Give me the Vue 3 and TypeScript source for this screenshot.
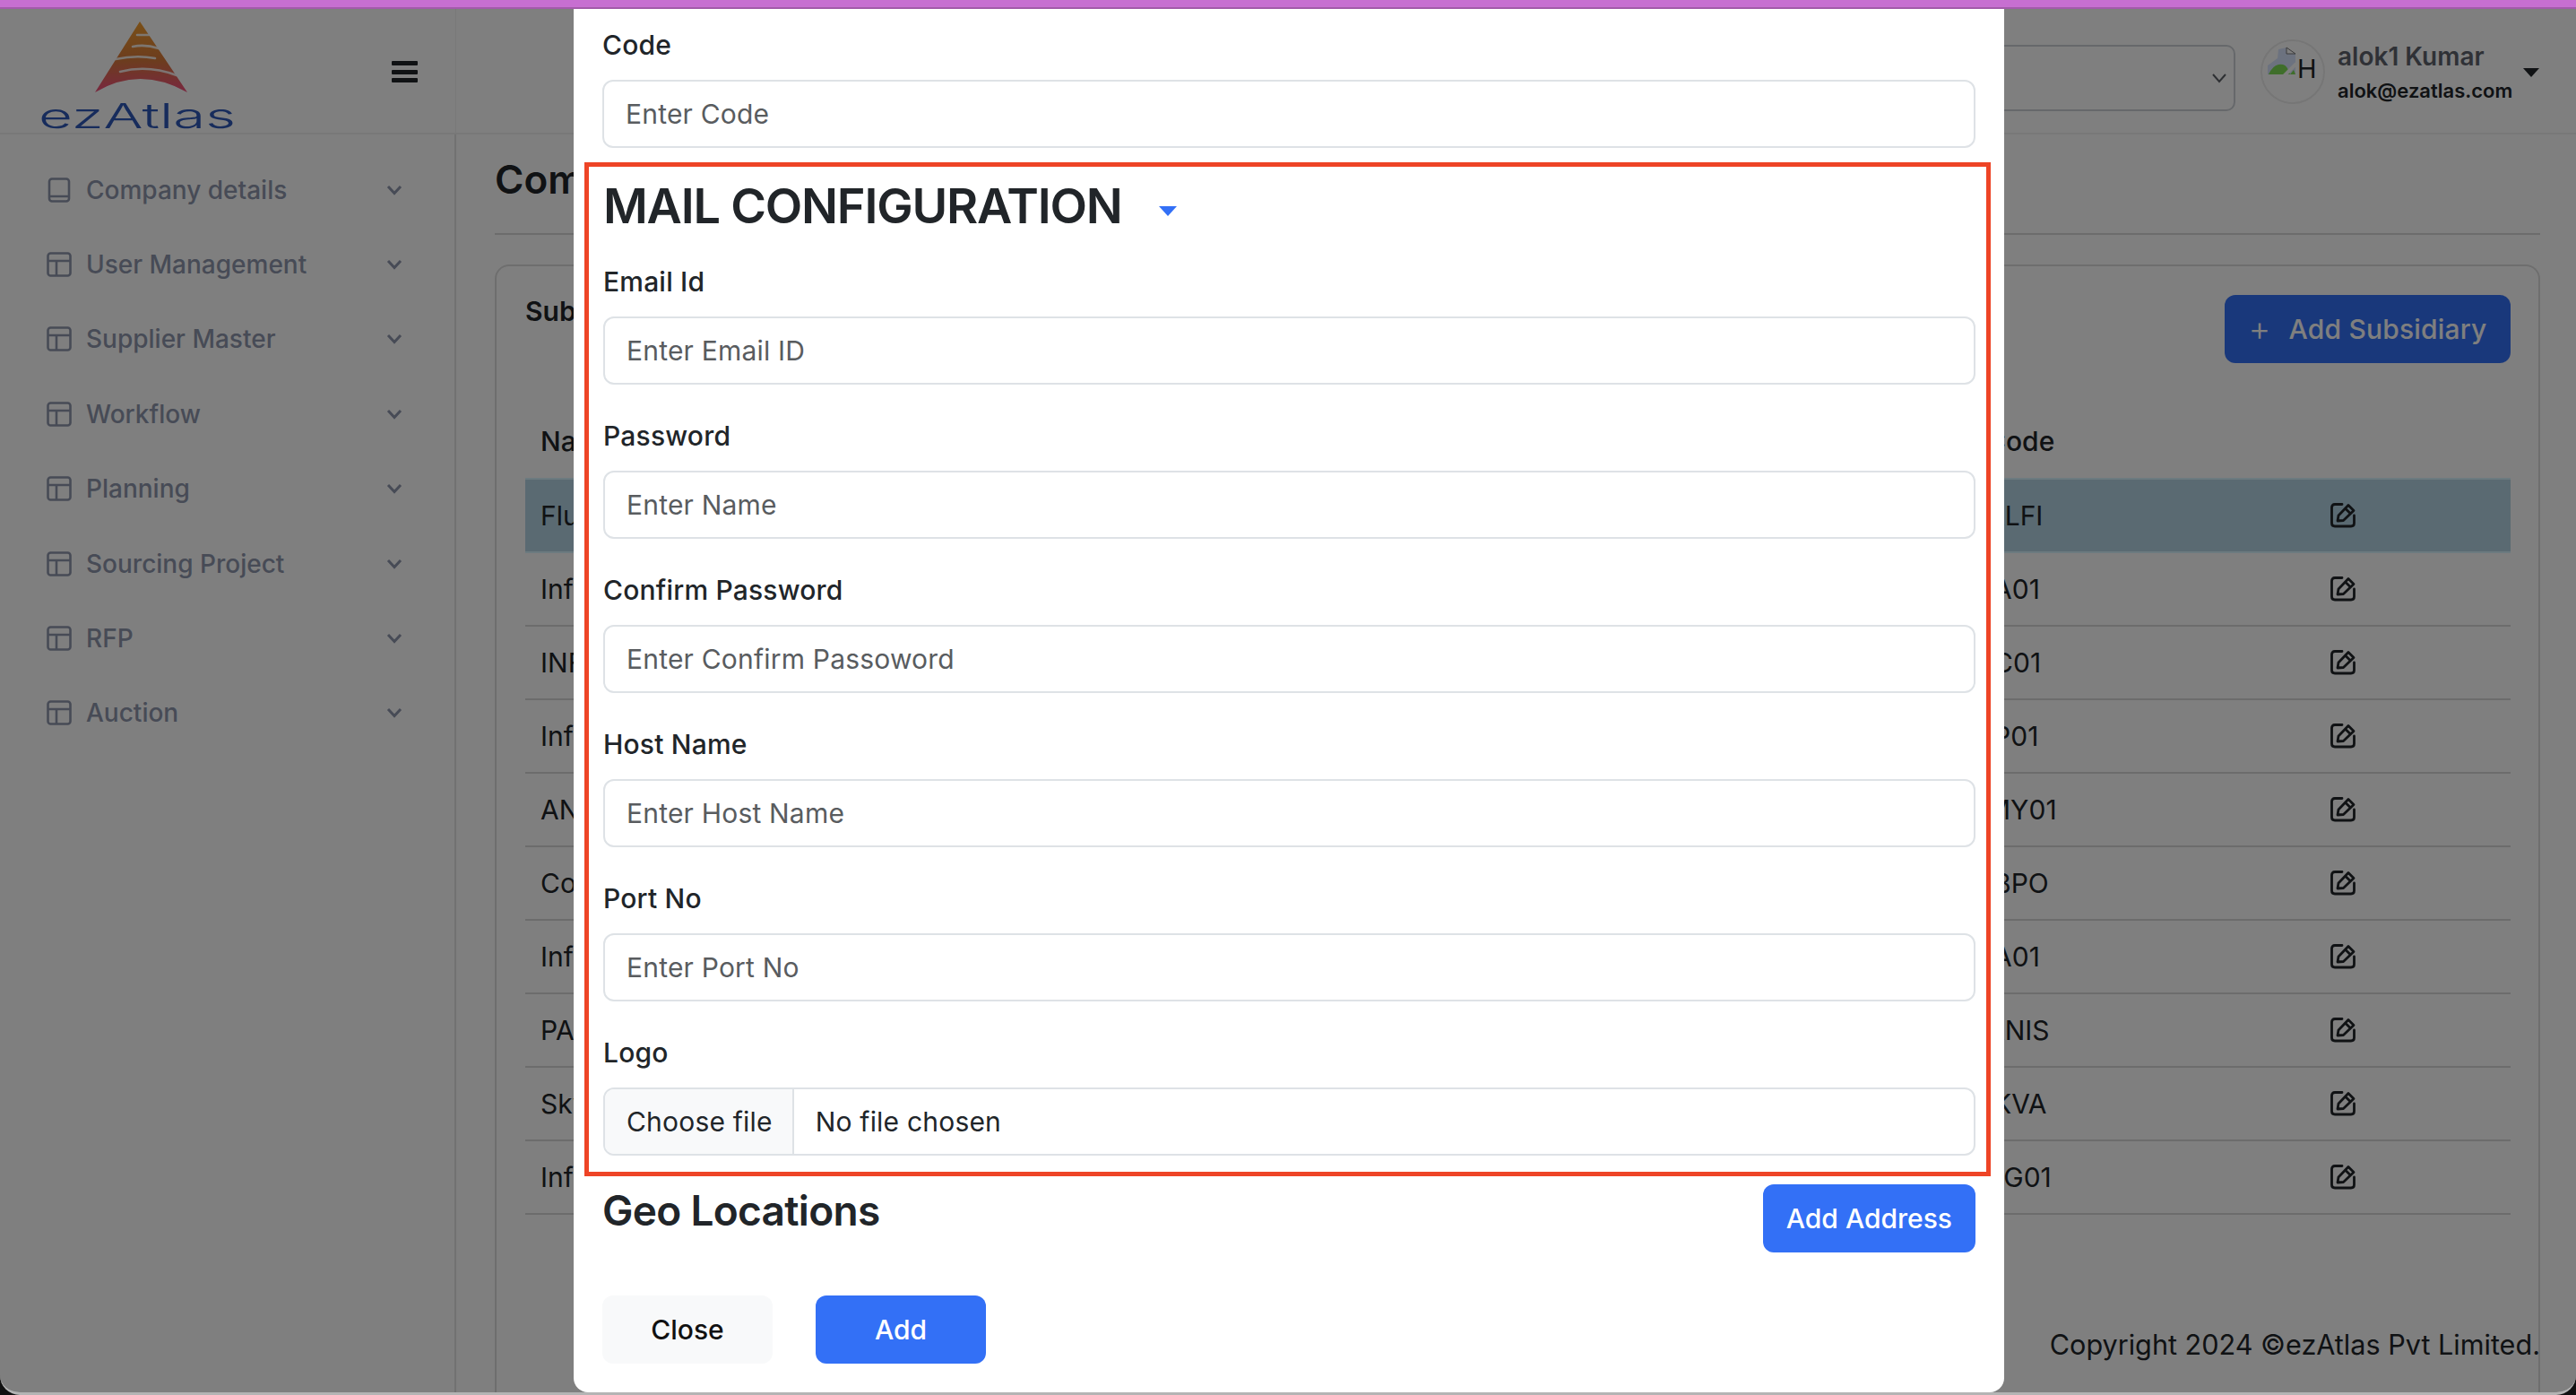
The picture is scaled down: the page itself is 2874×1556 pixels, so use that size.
<template>
  <div class="screen">
    <div class="top-stripe"></div>
    <div class="window">
      <header class="topbar">
        <div class="brand">
          <svg class="logo" viewBox="0 0 230 134" width="230" height="134">
            <defs>
              <linearGradient id="peak" x1="0" y1="0" x2="0" y2="1">
                <stop offset="0" stop-color="#f4a030" />
                <stop offset="0.55" stop-color="#d97a3c" />
                <stop offset="1" stop-color="#f24f80" />
              </linearGradient>
            </defs>
            <path d="M116 10 L169 89 Q116 59 66 89 Z" fill="url(#peak)" />
            <g fill="none" stroke="#fff" stroke-width="2.6" stroke-linecap="round" opacity="0.85">
              <path d="M94 66 Q125 58 157 70" />
              <path d="M89 52 Q112 47 133 51" />
              <path d="M108 38 Q122 35 137 40" />
              <path d="M113 25 H126" />
            </g>
            <text x="3" y="129" class="logo-text" textLength="220" lengthAdjust="spacingAndGlyphs">ezAtlas</text>
          </svg>
          <button class="burger" aria-label="Menu"><span></span><span></span><span></span></button>
        </div>
        <div class="topbar-right">
          <div class="org-select">
            <svg width="20" height="14" viewBox="0 0 20 14"><path d="M3 3 L10 11 L17 3" fill="none" stroke="#5d6166" stroke-width="2" /></svg>
          </div>
          <div class="avatar">
            <svg width="34" height="34" viewBox="0 0 34 34">
              <path d="M1 31 V21 L12 13 L13 3 L22 1 L32 8 V31 Z" fill="#d8e4ff" />
              <path d="M2 31 Q8 18 18 20 Q23 21 26 31 Z M26 31 L30 26 L32 31 Z" fill="#7edd56" />
              <path d="M19 33 L33 19" stroke="#fff" stroke-width="4" />
              <path d="M22 1 V8 H32 Z" fill="#fff" stroke="#777" stroke-width="1" />
            </svg>
            <span class="avatar-alt">H</span>
          </div>
          <div class="user">
            <div class="user-name">alok1 Kumar</div>
            <div class="user-mail">alok@ezatlas.com</div>
          </div>
          <span class="caret"></span>
        </div>
      </header>

      <div class="body">
        <aside class="sidebar">
          <div v-for="(item, i) in menu" :key="item" class="menu-item">
            <svg v-if="i === 0" class="menu-icon" viewBox="0 0 28 28" width="28" height="28">
              <rect x="3" y="1.5" width="22" height="25" rx="3" fill="none" stroke="#8e96ac" stroke-width="2.6" />
              <path d="M3 21 H25" fill="none" stroke="#8e96ac" stroke-width="2.6" />
            </svg>
            <svg v-else class="menu-icon" viewBox="0 0 28 28" width="28" height="28">
              <rect x="1.5" y="1.5" width="25" height="25" rx="3" fill="none" stroke="#8e96ac" stroke-width="2.6" />
              <path d="M1.5 10 H26.5 M11 10 V26.5" fill="none" stroke="#8e96ac" stroke-width="2.6" />
            </svg>
            <span class="menu-label">{{ item }}</span>
            <svg width="18" height="12" viewBox="0 0 18 12"><path d="M2 2 L9 9.5 L16 2" fill="none" stroke="#8e96ac" stroke-width="3" /></svg>
          </div>
        </aside>

        <main class="content">
          <h2 class="page-title">Company</h2>
          <section class="card">
            <div class="card-head">
              <h3 class="card-title">Subsidiaries</h3>
              <button class="btn-subsidiary"><span class="plus">+</span>Add Subsidiary</button>
            </div>
            <table class="subs">
              <thead>
                <tr><th>Name</th><th>Code</th><th></th></tr>
              </thead>
              <tbody>
                <tr v-for="(row, i) in rows" :key="i" :class="{ active: i === 0 }">
                  <td>{{ row.name }}</td>
                  <td>{{ row.code }}</td>
                  <td>
                    <svg class="edit" viewBox="0 0 28 28" width="28" height="28">
                      <path d="M13 1.5 H5 Q1.5 1.5 1.5 5 V22.5 Q1.5 26 5 26 H23 Q26.5 26 26.5 22.5 V14" fill="none" stroke="#212529" stroke-width="2.8" stroke-linecap="round" />
                      <path d="M8 20 L9 14 L20 2.5 L26 8.5 L14.5 19.5 Z M16.5 6 L22.5 12" fill="none" stroke="#212529" stroke-width="2.8" stroke-linejoin="round" />
                    </svg>
                  </td>
                </tr>
              </tbody>
            </table>
            <div class="copyright">Copyright 2024 ©ezAtlas Pvt Limited.</div>
          </section>
        </main>
      </div>

      <div class="backdrop"></div>

      <div class="modal">
        <div class="field outer">
          <label>Code</label>
          <input type="text" placeholder="Enter Code" />
        </div>

        <section class="mail-box">
          <h2 class="mail-title">MAIL CONFIGURATION<span class="mail-caret"></span></h2>
          <div v-for="f in mailFields" :key="f.label" class="field">
            <label>{{ f.label }}</label>
            <input type="text" :placeholder="f.placeholder" />
          </div>
          <div class="field last">
            <label>Logo</label>
            <div class="file-input">
              <span class="file-btn">Choose file</span>
              <span class="file-name">No file chosen</span>
            </div>
          </div>
        </section>

        <div class="geo-row">
          <h3 class="geo-title">Geo Locations</h3>
          <button class="btn primary">Add Address</button>
        </div>

        <div class="modal-actions">
          <button class="btn light">Close</button>
          <button class="btn primary wide">Add</button>
        </div>
      </div>
    </div>
  </div>
</template>

<script setup lang="ts">
const menu: string[] = [
  'Company details',
  'User Management',
  'Supplier Master',
  'Workflow',
  'Planning',
  'Sourcing Project',
  'RFP',
  'Auction'
]

interface Row {
  name: string
  code: string
}

const rows: Row[] = [
  { name: 'Fluid', code: 'ALFI' },
  { name: 'Infra', code: 'IA01' },
  { name: 'INFO', code: 'IC01' },
  { name: 'Infra', code: 'IP01' },
  { name: 'ANY', code: 'MY01' },
  { name: 'Corp', code: 'IBPO' },
  { name: 'Infra', code: 'IA01' },
  { name: 'PAN', code: 'ANIS' },
  { name: 'Sky', code: 'IKVA' },
  { name: 'Infra', code: 'SG01' }
]

const mailFields = [
  { label: 'Email Id', placeholder: 'Enter Email ID' },
  { label: 'Password', placeholder: 'Enter Name' },
  { label: 'Confirm Password', placeholder: 'Enter Confirm Passoword' },
  { label: 'Host Name', placeholder: 'Enter Host Name' },
  { label: 'Port No', placeholder: 'Enter Port No' }
]
</script>

<style>
html,
body {
  margin: 0;
  background: #111;
}
</style>

<style scoped>
* {
  box-sizing: border-box;
}
.screen {
  width: 2874px;
  height: 1556px;
  font-family: Inter, 'Liberation Sans', sans-serif;
  color: #212529;
  overflow: hidden;
  background: #111;
}
.top-stripe {
  height: 10px;
  background: #c76fd1;
  border-bottom: 2px solid #a25ba9;
}
.window {
  position: relative;
  height: 1546px;
  display: flex;
  flex-direction: column;
  background: #fff;
  border-bottom: 3px solid #b4b4b4;
  border-radius: 0 0 22px 22px;
  overflow: hidden;
}

/* header */
.topbar {
  height: 140px;
  flex: none;
  display: flex;
  justify-content: space-between;
  border-bottom: 2px solid #f0f0f0;
}
.brand {
  width: 509px;
  padding-left: 40px;
  display: flex;
  border-right: 1px solid #f2f2f2;
}
.logo {
  margin-top: 4px;
}
.logo-text {
  font-size: 38px;
  fill: #2e58b8;
  font-weight: 300;
  font-family: Inter, sans-serif;
}
.burger {
  margin: 58px 0 0 167px;
  width: 29px;
  height: 24px;
  padding: 0;
  border: 0;
  background: none;
  display: flex;
  flex-direction: column;
  justify-content: space-between;
}
.burger span {
  display: block;
  height: 5px;
  background: #212529;
  border-radius: 1px;
}
.topbar-right {
  display: flex;
  align-items: flex-start;
}
.org-select {
  width: 600px;
  height: 74px;
  margin-top: 40px;
  border: 2px solid #cdd1d6;
  border-radius: 10px;
  display: flex;
  align-items: center;
  justify-content: flex-end;
  padding-right: 6px;
}
.avatar {
  width: 72px;
  height: 72px;
  margin: 34px 0 0 28px;
  border: 2px solid #ececec;
  border-radius: 50%;
  display: flex;
  align-items: flex-start;
  padding-left: 5px;
}
.avatar svg {
  margin-top: 6px;
  flex: none;
}
.avatar-alt {
  font-size: 29px;
  line-height: 1;
  color: #212529;
  margin-top: 16px;
}
.user {
  margin: 34px 0 0 14px;
  width: 207px;
}
.user-name {
  font-size: 28px;
  line-height: 38px;
  font-weight: 600;
  color: #5e636c;
  white-space: nowrap;
}
.user-mail {
  font-size: 22px;
  line-height: 38px;
  font-weight: 600;
  white-space: nowrap;
}
.caret {
  margin: 66px 41px 0 0;
  border-left: 9px solid transparent;
  border-right: 9px solid transparent;
  border-top: 10px solid #212529;
}

/* body */
.body {
  flex: 1;
  display: flex;
  min-height: 0;
}
.sidebar {
  width: 509px;
  flex: none;
  border-right: 2px solid #e2e2e2;
  padding: 20px 58px 0 52px;
}
.menu-item {
  height: 83.4px;
  display: flex;
  align-items: center;
  color: #8e96ac;
}
.menu-icon {
  flex: none;
}
.menu-label {
  flex: 1;
  margin-left: 16px;
  font-size: 28px;
  font-weight: 500;
}
.content {
  flex: 1;
  min-width: 0;
  padding: 0 40px 0 43px;
  display: flex;
  flex-direction: column;
}
.page-title {
  margin: 0;
  height: 112px;
  padding-top: 18px;
  font-size: 44px;
  line-height: 64px;
  font-weight: 600;
  border-bottom: 2px solid #d8d8d8;
}
.card {
  flex: 1;
  margin-top: 33px;
  padding: 32px 31px 0 32px;
  border: 2px solid #dcdcdc;
  border-bottom: 0;
  border-radius: 16px 16px 0 0;
  display: flex;
  flex-direction: column;
}
.card-head {
  height: 76px;
  display: flex;
  justify-content: space-between;
}
.card-title {
  margin: 0;
  font-size: 30px;
  line-height: 36px;
  font-weight: 600;
}
.btn-subsidiary {
  width: 319px;
  height: 76px;
  border: 0;
  border-radius: 12px;
  background: #3370f6;
  color: #fff;
  font: 500 30px Inter, sans-serif;
  letter-spacing: 0.2px;
  white-space: nowrap;
}
.plus {
  font-weight: 300;
  font-size: 38px;
  line-height: 30px;
  margin-right: 20px;
  vertical-align: -2px;
}
.subs {
  margin-top: 46px;
  width: 2215px;
  table-layout: fixed;
  border-collapse: separate;
  border-spacing: 0;
  font-size: 30px;
}
.subs th:nth-child(1),
.subs td:nth-child(1) {
  width: 1613px;
}
.subs th:nth-child(2),
.subs td:nth-child(2) {
  width: 384px;
}
.subs th {
  height: 84px;
  text-align: left;
  font-weight: 500;
  padding: 0 17px;
  border-bottom: 2px solid #d8f4ff;
}
.subs td {
  height: 82px;
  padding: 0 17px;
  border-bottom: 2px solid #d8d8d8;
}
.subs .active td {
  background: #b4d4e4;
  border-bottom-color: #d8f4ff;
}
.edit {
  display: block;
}
.copyright {
  margin: auto -33px 31px 0;
  text-align: right;
  font-size: 30.6px;
  line-height: 44px;
}

/* overlay */
.backdrop {
  position: absolute;
  inset: 0;
  background: rgba(0, 0, 0, 0.5);
}
.modal {
  position: absolute;
  top: 0;
  bottom: 0;
  left: 640px;
  width: 1596px;
  padding: 18px 15px 0 12px;
  background: #fff;
  border-radius: 0 0 16px 16px;
  overflow: hidden;
  letter-spacing: 0.2px;
}
.field {
  margin-bottom: 35px;
}
.field.outer {
  margin: 0 17px 16px 20px;
}
.field.last {
  margin-bottom: 0;
}
.field label {
  display: block;
  font-size: 30px;
  line-height: 45px;
  font-weight: 500;
  margin-bottom: 16px;
}
.field input {
  display: block;
  width: 100%;
  height: 76px;
  padding: 0 24px;
  border: 2px solid #dee2e6;
  border-radius: 12px;
  font: 400 30px Inter, sans-serif;
  letter-spacing: 0.2px;
  color: #212529;
  background: #fff;
  outline: none;
}
.field input::placeholder {
  color: #595c5f;
  opacity: 1;
}
.mail-box {
  padding: 10px 12px 18px 16px;
  border: 5px solid #ee4426;
}
.mail-title {
  margin: 0 0 28px;
  font-size: 54px;
  line-height: 68px;
  font-weight: 600;
  letter-spacing: -1.2px;
}
.mail-caret {
  display: inline-block;
  margin-left: 41px;
  vertical-align: 8px;
  border-left: 10px solid transparent;
  border-right: 10px solid transparent;
  border-top: 11px solid #3370f6;
}
.file-input {
  height: 76px;
  display: flex;
  align-items: center;
  border: 2px solid #dee2e6;
  border-radius: 12px;
  overflow: hidden;
  font-size: 30px;
}
.file-btn {
  height: 100%;
  padding: 0 22px 0 24px;
  display: flex;
  align-items: center;
  background: #f8f9fa;
  border-right: 2px solid #dee2e6;
}
.file-name {
  margin-left: 24px;
}
.geo-row {
  margin: 9px 17px 0 20px;
  display: flex;
  justify-content: space-between;
}
.geo-title {
  margin: 0;
  font-size: 46px;
  line-height: 58px;
  font-weight: 600;
  letter-spacing: -0.7px;
}
.btn {
  height: 76px;
  padding: 0 26px;
  border: 0;
  border-radius: 12px;
  font: 500 30px Inter, sans-serif;
}
.btn.primary {
  background: #3370f6;
  color: #fff;
}
.btn.light {
  width: 190px;
  background: #f8f9fa;
  color: #111;
}
.btn.wide {
  width: 190px;
}
.modal-actions {
  margin: 48px 17px 0 20px;
  display: flex;
  gap: 48px;
}
</style>
